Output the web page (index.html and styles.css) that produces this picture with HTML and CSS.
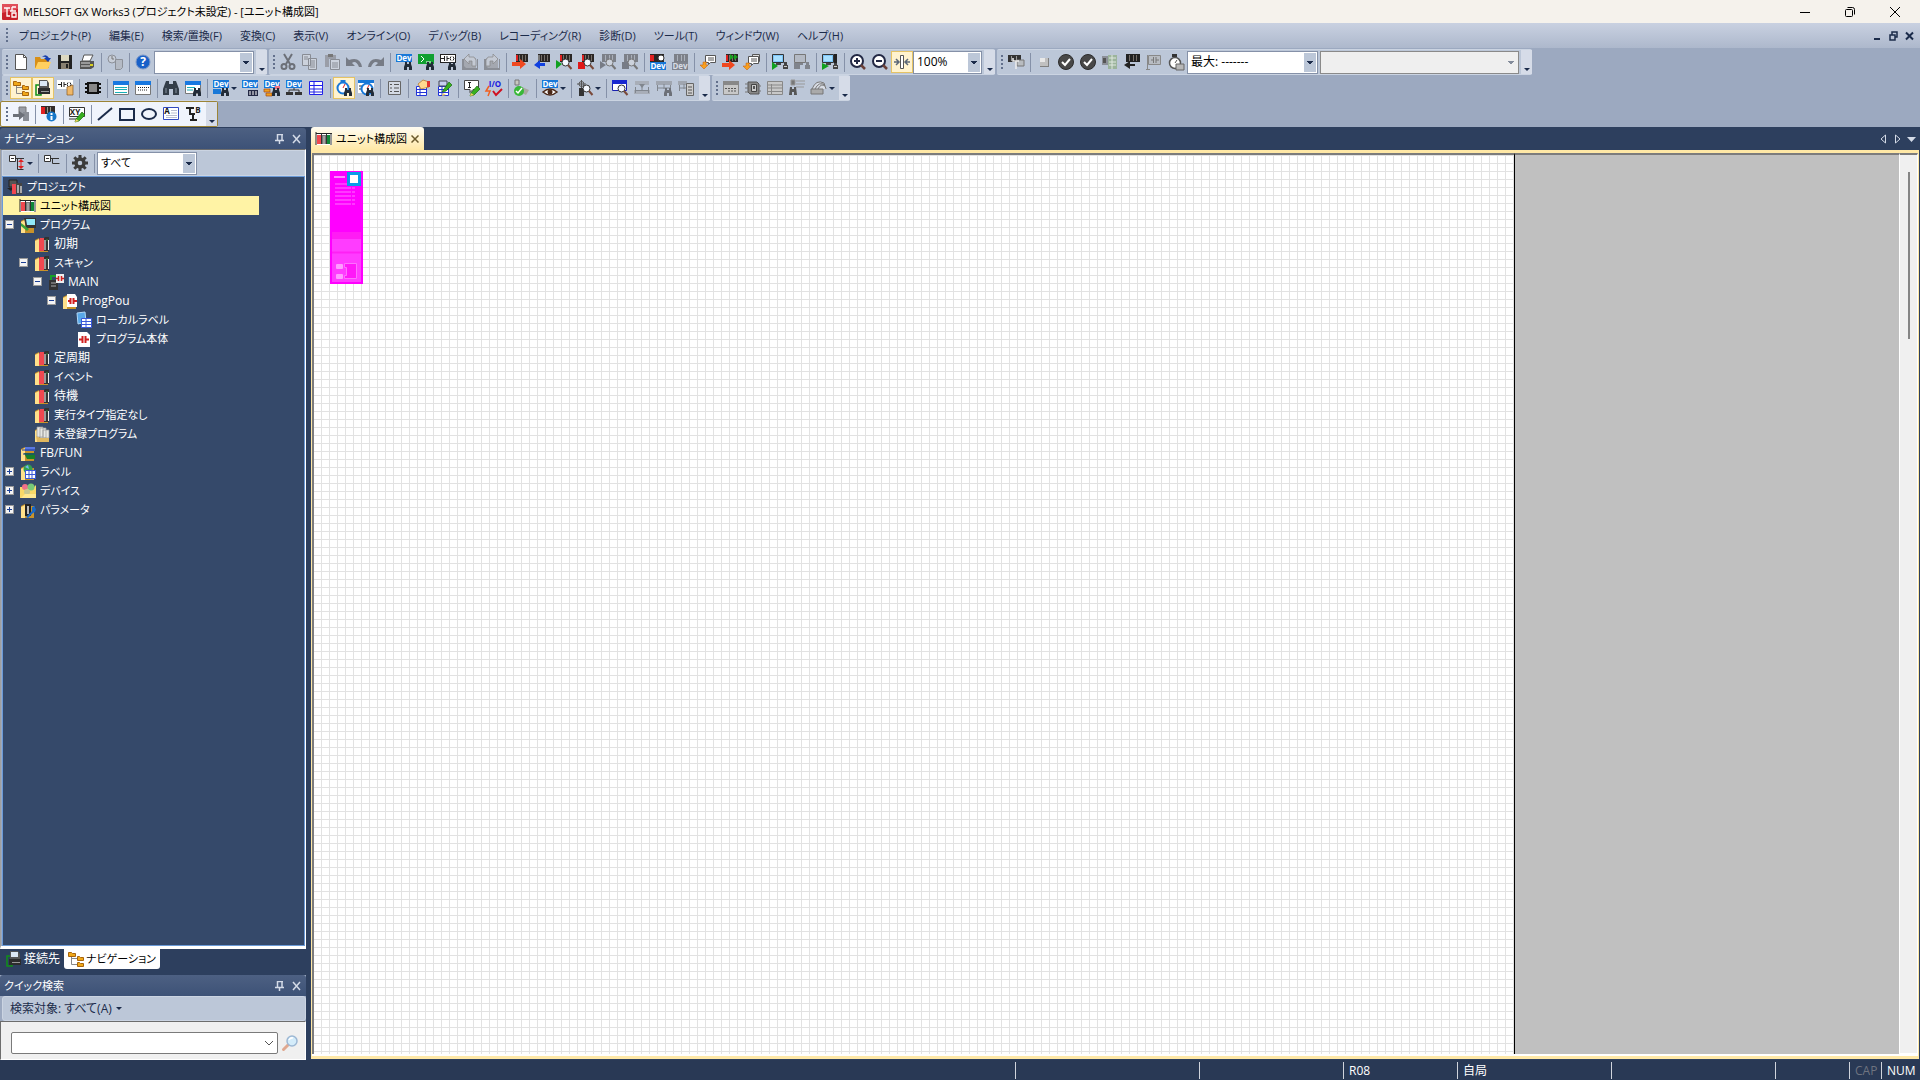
FILE: index.html
```html
<!DOCTYPE html>
<html lang="ja">
<head>
  <meta charset="UTF-8">
  <meta name="viewport" content="width=device-width, initial-scale=1.0">
  <title>MELSOFT GX Works3</title>
  <link rel="stylesheet" href="styles.css">
</head>
<body>
  <header class="titlebar">
    <svg class="icon" viewBox="0 0 16 16"><rect width="16" height="16" rx="1" fill="#c8202a"/><path d="M0 0h16v5L0 9z" fill="#e0505a"/><path d="M2 4h6M5 4v8h3M10 3v4h4M10 3h4M10 9h4v4h-4zM8 7h2" fill="none" stroke="#fff" stroke-width="1.3"/></svg>
    <h1>MELSOFT GX Works3 (プロジェクト未設定) - [ユニット構成図]</h1>
    <div class="window-btns">
      <button aria-label="最小化"><svg viewBox="0 0 10 10"><path d="M0 5.5h10" stroke="#000" fill="none"/></svg></button>
      <button aria-label="元に戻す"><svg viewBox="0 0 10 10"><path d="M.5 3.5a1 1 0 0 1 1-1h5a1 1 0 0 1 1 1v5a1 1 0 0 1-1 1h-5a1 1 0 0 1-1-1zM2.500.5h5a2 2 0 0 1 2 2v5" stroke="#000" fill="none"/></svg></button>
      <button aria-label="閉じる"><svg viewBox="0 0 10 10"><path d="M0 0l10 10M10 0L0 10" stroke="#000" fill="none"/></svg></button>
    </div>
  </header>

  <nav class="menubar">
    <span class="grip"></span>
    <ul class="menu" id="menu">
      <li><a href="#">プロジェクト(P)</a></li>
      <li><a href="#">編集(E)</a></li>
      <li><a href="#">検索/置換(F)</a></li>
      <li><a href="#">変換(C)</a></li>
      <li><a href="#">表示(V)</a></li>
      <li><a href="#">オンライン(O)</a></li>
      <li><a href="#">デバッグ(B)</a></li>
      <li><a href="#">レコーディング(R)</a></li>
      <li><a href="#">診断(D)</a></li>
      <li><a href="#">ツール(T)</a></li>
      <li><a href="#">ウィンドウ(W)</a></li>
      <li><a href="#">ヘルプ(H)</a></li>
    </ul>
    <div class="mdi-btns">
      <button aria-label="子ウィンドウを最小化"><svg viewBox="0 0 10 10"><path d="M1 8h6" stroke="#1b2b4a" stroke-width="2"/></svg></button>
      <button aria-label="子ウィンドウを元に戻す"><svg viewBox="0 0 10 10"><path d="M1 4h5v5H1zM3 4V1h5v5H6" stroke="#1b2b4a" stroke-width="1.500" fill="none"/></svg></button>
      <button aria-label="子ウィンドウを閉じる"><svg viewBox="0 0 10 10"><path d="M1 1.500l7 7M8 1.500l-7 7" stroke="#1b2b4a" stroke-width="2"/></svg></button>
    </div>
  </nav>

  <div class="toolbars">
    <div class="toolbar-row">
      <div class="toolbar" data-items="new open save print | chat | help">
        <div class="combo w-help"><select aria-label="ヘルプ検索"><option></option></select></div>
      </div>
      <div class="toolbar" data-items="cut copy paste undo redo | devfind cmdfind labfind back forward | write read monstart monstop monstart2 monstop2 | devmon devmod | cmt modcmt cmt2 | sim simoff | simsys | zoomin zoomout fit*">
        <div class="combo w-zoom"><select aria-label="表示倍率"><option>100%</option></select></div>
      </div>
      <div class="toolbar" data-items="conn | stop check check list readg flag clock">
        <div class="combo w-max"><select aria-label="最大"><option>最大: -------</option></select></div>
        <div class="combo w-target disabled"><select aria-label="対象" disabled><option></option></select></div>
      </div>
    </div>
    <div class="toolbar-row">
      <div class="toolbar" data-items="navi* online* parts | chip | out1 out2 | bino find | devuse+ devlist devtree devnet table | watch* watch2 | doc | hand pen | edit io | verify | eye+ | sight+ | winfind t1 t2 t3"></div>
      <div class="toolbar" data-items="g1 g2 g3 g4 g5+"></div>
    </div>
    <div class="toolbar-row">
      <div class="toolbar active" data-items="import | modinfo | xy | line rect oval label tb"></div>
    </div>
  </div>

  <main class="workspace">
    <aside class="side">
      <section class="panel nav-panel">
        <div class="panel-head">
          <h2>ナビゲーション</h2>
          <button aria-label="固定"><svg viewBox="0 0 10 10"><path d="M2.500 0v6M7 0v6M2 .5h6M0 6.500h9M4.500 7v3" stroke="#d4dbe8" stroke-width="1.500" fill="none"/></svg></button>
          <button aria-label="閉じる"><svg viewBox="0 0 10 10"><path d="M1 1l7 8M8 1L1 9" stroke="#d4dbe8" stroke-width="1.500"/></svg></button>
        </div>
        <div class="panel-body">
          <div class="tree-bar">
            <button class="tool drop" title="展開"><svg class="icon" viewBox="0 0 16 16"><path d="M.5.5h6v6h-6zM2 3.500h3" fill="#fff" stroke="#333"/><path d="M7 3.500h8M8.500 3.500v11h6" fill="none" stroke="#333"/><path d="M9 7l3-3 3 3zM9 11l3 3 3-3zM11.500 7h1v4h-1z" fill="#e02020"/></svg></button>
            <span class="sep"></span>
            <button class="tool" title="折りたたむ"><svg class="icon" viewBox="0 0 16 16"><path d="M.5.5h6v6h-6zM2 3.500h3" fill="#fff" stroke="#333"/><path d="M7 3.500h8M8.500 3.500v5h7" fill="none" stroke="#333"/></svg></button>
            <span class="sep"></span>
            <button class="tool" title="設定"><svg class="icon" viewBox="0 0 16 16"><circle cx="8" cy="8" r="4" fill="none" stroke="#3c3c3c" stroke-width="3.500"/><path d="M8 0v4M8 12v4M0 8h4M12 8h4M2.300 2.300l3 3M10.700 10.700l3 3M13.700 2.300l-3 3M5.300 10.700l-3 3" stroke="#3c3c3c" stroke-width="3"/></svg></button>
            <span class="sep"></span>
            <div class="combo w-filter"><select aria-label="表示対象"><option>すべて</option></select></div>
          </div>
          <ul class="tree" id="tree"></ul>
        </div>
      </section>
      <div class="side-tabs">
        <a href="#" class="side-tab"><svg class="icon" data-icon="online"></svg>接続先</a>
        <a href="#" class="side-tab current"><svg class="icon" data-icon="navi"></svg>ナビゲーション</a>
      </div>
      <section class="panel quick-panel">
        <div class="panel-head">
          <h2>クイック検索</h2>
          <button aria-label="固定"><svg viewBox="0 0 10 10"><path d="M2.500 0v6M7 0v6M2 .5h6M0 6.500h9M4.500 7v3" stroke="#d4dbe8" stroke-width="1.500" fill="none"/></svg></button>
          <button aria-label="閉じる"><svg viewBox="0 0 10 10"><path d="M1 1l7 8M8 1L1 9" stroke="#d4dbe8" stroke-width="1.500"/></svg></button>
        </div>
        <button class="quick-target">検索対象: すべて(A)</button>
        <div class="quick-body">
          <div class="quick-input">
            <select aria-label="検索文字列"><option></option></select>
            <svg viewBox="0 0 10 6"><path d="M1 1l4 4 4-4" fill="none" stroke="#555"/></svg>
          </div>
          <button class="quick-go" aria-label="検索"><svg class="icon" viewBox="0 0 16 16"><path d="M1.500 14.500l5-5" stroke="#e0a890" stroke-width="3" stroke-linecap="round"/><circle cx="10" cy="6" r="5" fill="#d4ecfa" stroke="#9db8d4" stroke-width="1.500"/><path d="M7 5a3.500 3.500 0 0 1 4-2" stroke="#fff" stroke-width="1.500" fill="none"/></svg></button>
        </div>
      </section>
    </aside>

    <section class="document">
      <div class="doc-tabs">
        <div class="doc-tab">
          <svg class="icon" data-icon="unit"></svg>
          <a href="#">ユニット構成図</a>
          <button aria-label="タブを閉じる"><svg viewBox="0 0 8 8"><path d="M.5.5l7 7M7.500.5l-7 7" stroke="#6b5a2c" stroke-width="1.500"/></svg></button>
        </div>
        <div class="doc-arrows">
          <button aria-label="前のタブ"><svg viewBox="0 0 9 10"><path d="M6.500 1v8L2 5z" fill="#2c3d5b" stroke="#d4dbe8"/></svg></button>
          <button aria-label="次のタブ"><svg viewBox="0 0 9 10"><path d="M2.500 1v8L7 5z" fill="#2c3d5b" stroke="#d4dbe8"/></svg></button>
          <button aria-label="タブ一覧"><svg viewBox="0 0 9 10"><path d="M0 3h9L4.500 8z" fill="#d4dbe8"/></svg></button>
        </div>
      </div>
      <div class="canvas">
        <div class="sheet">
          <svg class="cpu" viewBox="0 0 33 113">
            <rect width="33" height="113" fill="#f0f"/>
            <rect x="2" y="61" width="29" height="7" fill="#ff1cf4"/>
            <rect x="2" y="68" width="29" height="43" fill="#ff3cff"/>
            <path d="M2 81.500h29" stroke="#ff20f4" stroke-width="2"/>
            <path d="M4 6h11" stroke="#ff8cff" stroke-width="2"/>
            <path d="M5 13h20M5 17h20M5 21h20M5 25h20M5 29h20M5 33h20" stroke="#ff38ff" stroke-width="2"/>
            <path d="M21.500 12v23" stroke="#f0f"/>
            <rect x="6" y="93" width="7" height="5" rx="1" fill="#ff9cff"/>
            <rect x="6" y="103" width="7" height="5" rx="1" fill="#ff9cff"/>
            <path d="M14.500 92.500h12v15h-12v-3h2v-8h-2z" fill="#ff18f8" stroke="#ff70ff"/>
            <rect x="17" y="1" width="14" height="14" fill="#0a9be8"/>
            <rect x="20" y="4" width="8" height="8" fill="#fff"/>
          </svg>
        </div>
        <div class="outside"></div>
        <div class="scrollbar"><span class="thumb"></span></div>
      </div>
    </section>
  </main>

  <footer class="statusbar">
    <span class="cell"></span>
    <span class="cell s-a"></span>
    <span class="cell s-b"></span>
    <span class="cell s-cpu">R08</span>
    <span class="cell s-host">自局</span>
    <span class="cell s-c"></span>
    <span class="cell s-d"></span>
    <span class="cell s-cap">CAP</span>
    <span class="cell s-num">NUM</span>
  </footer>

  <script src="script.js"></script>
</body>
</html>
```

FILE: styles.css
```css
* {
  box-sizing: border-box;
}

body {
  margin: 0;
  height: 100vh;
  display: flex;
  flex-direction: column;
  overflow: hidden;
  font-family: "Open Sans", "Noto Sans CJK JP", sans-serif;
  font-size: 12px;
  line-height: 16px;
  font-feature-settings: "palt";
  background-color: #293955;
  color: #1b2b4a;
}

button,
select {
  font: inherit;
  font-feature-settings: inherit;
  color: inherit;
  border: none;
  background: none;
  margin: 0;
  padding: 0;
}

a {
  color: inherit;
  text-decoration: none;
}

ul {
  list-style: none;
  margin: 0;
  padding: 0;
}

h1,
h2 {
  margin: 0;
  font-size: 11px;
  font-weight: normal;
  white-space: nowrap;
}

svg {
  display: block;
}

.icon {
  width: 16px;
  height: 16px;
  flex: none;
  overflow: visible;
}

/* title bar */
.titlebar {
  height: 23px;
  display: flex;
  align-items: center;
  gap: 5px;
  padding: 0 3px 0 2px;
  background-color: #f5f2ec;
  color: #000;
}

.window-btns {
  display: flex;
  margin-left: auto;
}

.window-btns button {
  width: 45px;
  height: 20px;
  display: flex;
  align-items: center;
  justify-content: center;
}

.window-btns svg,
.mdi-btns svg,
.panel-head svg {
  width: 10px;
  height: 10px;
}

/* menu */
.menubar {
  height: 25px;
  display: flex;
  align-items: center;
  padding-left: 4px;
  background: linear-gradient(#c9d1e1, #adb8cc);
}

.grip {
  width: 6px;
  height: 15px;
  flex: none;
  background: linear-gradient(#62708c, #62708c) center top / 2px 2px no-repeat,
    linear-gradient(#62708c, #62708c) center 4px / 2px 2px no-repeat,
    linear-gradient(#62708c, #62708c) center 8px / 2px 2px no-repeat,
    linear-gradient(#62708c, #62708c) center 12px / 2px 2px no-repeat;
}

.menu {
  display: flex;
  gap: 18px;
  margin-left: 9px;
  font-size: 11px;
}

.menu li {
  white-space: nowrap;
}

.mdi-btns {
  display: flex;
  gap: 6px;
  margin-left: auto;
  padding-right: 5px;
}

/* toolbars */
.toolbars {
  padding-top: 1px;
  background-color: #9ca9c0;
}

.toolbar-row {
  display: flex;
  gap: 2px;
  padding-left: 2px;
}

.toolbar {
  height: 26px;
  display: flex;
  align-items: center;
  padding-left: 2px;
  background-color: #bcc7d8;
  border: 1px solid #cbd4e2;
  border-width: 1px 0;
  border-radius: 2px;
}

.toolbar.active {
  margin-left: -2px;
  padding-left: 3px;
  background-color: #f0f4fc;
  border: 1px solid #9c8436;
}

.tool {
  width: 22px;
  height: 22px;
  flex: none;
  display: flex;
  align-items: center;
  justify-content: center;
}

.tool.on {
  background-color: #fff3cf;
  border: 1px solid #e5c365;
}

.tool.drop {
  width: 29px;
  gap: 2px;
}

.tool.drop::after,
.quick-target::after {
  content: "";
  border: 3px solid transparent;
  border-top-color: #1b2b4a;
  border-bottom: none;
}

.sep {
  width: 1px;
  height: 19px;
  margin: 0 2px 0 3px;
  flex: none;
  background-color: #8591a8;
}

.overflow {
  width: 11px;
  align-self: stretch;
  margin-left: 2px;
  display: flex;
  align-items: flex-end;
  justify-content: center;
  padding-bottom: 3px;
  background-color: #d6dce8;
}

.overflow::after {
  content: "";
  border: 3px solid transparent;
  border-top-color: #1b2b4a;
  border-bottom: none;
}

/* drop-downs */
.combo {
  position: relative;
  height: 23px;
  border: 1px solid #8591a8;
  background-color: #fff;
  color: #000;
}

.combo select {
  width: 100%;
  height: 21px;
  padding-left: 3px;
  appearance: none;
}

.combo::after {
  content: "";
  position: absolute;
  top: 1px;
  right: 1px;
  width: 12px;
  height: 19px;
  background: linear-gradient(#1b2b4a, #1b2b4a) center 8px / 6px 1px no-repeat,
    linear-gradient(#1b2b4a, #1b2b4a) center 9px / 4px 1px no-repeat,
    linear-gradient(#1b2b4a, #1b2b4a) center 10px / 2px 1px no-repeat,
    #bcc7d8;
  pointer-events: none;
}

.combo.disabled {
  margin-left: 2px;
  background-color: #efefef;
  border-color: #8a8a8a;
}

.combo.disabled::after {
  background-color: #efefef;
  opacity: 0.5;
}

.w-help { width: 100px; }
.w-zoom { width: 69px; }
.w-max { width: 131px; }
.w-target { width: 199px; }
.w-filter { width: 100px; }

.w-filter select {
  font-size: 11px;
}

/* work area */
.workspace {
  flex: 1;
  min-height: 0;
  display: flex;
  gap: 5px;
  padding-right: 1px;
  background-color: #2d3f5e;
}

.side {
  width: 306px;
  flex: none;
  display: flex;
  flex-direction: column;
  padding-top: 1px;
}

.panel {
  display: flex;
  flex-direction: column;
}

.nav-panel {
  flex: 1;
  min-height: 0;
}

.panel-head {
  height: 21px;
  flex: none;
  display: flex;
  align-items: center;
  gap: 7px;
  padding: 0 4px;
  background: linear-gradient(#4d6082, #3d5277);
  border-radius: 3px 3px 0 0;
  color: #fff;
}

.panel-head h2 {
  flex: 1;
}

.panel-body {
  flex: 1;
  min-height: 0;
  display: flex;
  flex-direction: column;
  padding-left: 1px;
  border: 1px solid #fff;
  border-top-color: #6d6d6d;
  border-left-color: #a0a0a0;
  border-bottom-width: 3px;
  background-color: #9ca9c0;
}

.tree-bar {
  height: 26px;
  flex: none;
  display: flex;
  align-items: center;
  padding-left: 3px;
  background-color: #bcc7d8;
  border: 1px solid #cbd4e2;
}

.tree {
  flex: 1;
  background-color: #35496a;
  border: 1px solid #6a9ad8;
  color: #fff;
}

.tree ul {
  padding-left: 14px;
}

.row {
  height: 19px;
  display: flex;
  align-items: center;
  gap: 4px;
  padding-left: 2px;
  white-space: nowrap;
}

.row.kana {
  font-size: 11px;
}

.row.selected {
  width: 85%;
  background-color: #fff3a5;
  color: #000;
}

.row.root {
  padding-left: 4px;
}

.toggle {
  width: 9px;
  height: 9px;
  margin-right: 2px;
  flex: none;
  background: linear-gradient(#1c3f94, #1c3f94) center / 5px 1px no-repeat #f4f4f4;
  border: 1px solid #9a9a9a;
}

.toggle.closed {
  background: linear-gradient(#1c3f94, #1c3f94) center / 5px 1px no-repeat,
    linear-gradient(#1c3f94, #1c3f94) center / 1px 5px no-repeat, #f4f4f4;
}

.toggle.none {
  visibility: hidden;
}

.side-tabs {
  display: flex;
  margin-bottom: 6px;
  padding-left: 2px;
}

.side-tab {
  height: 20px;
  display: flex;
  align-items: center;
  gap: 2px;
  padding: 0 4px;
  color: #fff;
}

.side-tab.current {
  background-color: #fff;
  color: #000;
  font-size: 11px;
  border-radius: 0 0 3px 3px;
}

.quick-target {
  height: 25px;
  display: flex;
  align-items: center;
  gap: 4px;
  padding-left: 7px;
  margin-left: 2px;
  background-color: #bcc7d8;
  border: 1px solid #cbd4e2;
  border-radius: 3px;
}

.quick-panel {
  background: #9ca9c0;
}

.quick-body {
  height: 39px;
  display: flex;
  align-items: center;
  gap: 4px;
  padding: 4px 7px 0 10px;
  background-color: #f0f0f0;
  border: 1px solid #fff;
  border-top-color: #6d6d6d;
  border-left-color: #6d6d6d;
}

.quick-input {
  flex: 1;
  height: 22px;
  display: flex;
  align-items: center;
  padding-right: 3px;
  border: 1px solid #7a7a7a;
  border-radius: 2px;
  background-color: #fff;
}

.quick-input select {
  flex: 1;
  height: 20px;
  appearance: none;
}

.quick-input svg {
  width: 10px;
  height: 6px;
}

/* document */
.document {
  flex: 1;
  min-width: 0;
  display: flex;
  flex-direction: column;
  padding-bottom: 1px;
}

.doc-tabs {
  height: 23px;
  flex: none;
  display: flex;
  align-items: stretch;
  justify-content: space-between;
}

.doc-tab {
  display: flex;
  align-items: center;
  gap: 4px;
  padding: 0 5px;
  background: linear-gradient(#fffcf2, #ffe8a6);
  border-radius: 3px 3px 0 0;
  color: #000;
  font-size: 11px;
}

.doc-tab button svg {
  width: 8px;
  height: 8px;
}

.doc-arrows {
  display: flex;
  align-items: center;
  gap: 5px;
  padding-right: 3px;
}

.doc-arrows svg {
  width: 9px;
  height: 10px;
}

.canvas {
  flex: 1;
  min-height: 0;
  display: flex;
  padding-bottom: 2px;
  border: 1px solid #ffe8a6;
  border-width: 3px 1px;
  background-color: #fff;
}

.sheet {
  width: 1203px;
  padding: 16px;
  border: 2px solid #7c7c7c;
  border-width: 2px 1px 0 2px;
  border-right-color: #000;
  background: linear-gradient(90deg, #e2e2e2 1px, transparent 1px) 7px 0 / 8px 8px,
    linear-gradient(#e2e2e2 1px, transparent 1px) 0 0 / 8px 8px #fff;
}

.cpu {
  width: 33px;
  height: 113px;
}

.outside {
  flex: 1;
  background-color: #c0c0c0;
  border-top: 2px solid #7c7c7c;
}

.scrollbar {
  width: 19px;
  display: flex;
  justify-content: center;
  padding-top: 17px;
  border: 1px solid #fff;
  border-top: 2px solid #7c7c7c;
  background-color: #f0f0f0;
}

.thumb {
  width: 2px;
  height: 19%;
  background-color: #858585;
}

/* status bar */
.statusbar {
  height: 20px;
  display: flex;
  align-items: center;
  background-color: #293955;
  color: #fff;
}

.cell {
  height: 17px;
  line-height: 18px;
  padding-left: 5px;
  border-left: 1px solid #d0d4dc;
  flex: none;
}

.cell:first-child {
  flex: 1;
  border-left: none;
}

.s-a { width: 184px; }
.s-b { width: 144px; }
.s-cpu { width: 114px; }
.s-host { width: 154px; }
.s-c { width: 164px; }
.s-d { width: 74px; }
.s-cap { width: 32px; color: #6f7480; }
.s-num { width: 39px; }
```

FILE: script.js
```js
// shared pieces, all on a 16x16 grid
const bino = '<path d="M9 8h2v2h2V8h2v2l1 3v3h-3v-3h-2v3H8v-3l1-3z" fill="#222c38"/>';
const gbino = bino.replace("#222c38", "#6c7078");
const mag = '<circle cx="9.500" cy="8.500" r="3.500" fill="#f4f8ff" stroke="#333"/><path d="M12 11l3.500 4" stroke="#7a4a3a" stroke-width="2"/>';
const gmag = mag.replace("#7a4a3a", "#777").replace("#333", "#777").replace("#f4f8ff", "#ccd2dc");
const plc = '<path d="M4 0h12v8H4z" fill="#2a2624"/><path d="M7.500 1v6M10.500 1v6M13.500 1v6" stroke="#77706a"/><path d="M4 1h2v6H4z" fill="#e02020"/>';
const gplc = '<path d="M2 0h14v8H2z" fill="#7c8088"/><path d="M5.500 1v6M9.500 1v6M12.500 1v6" stroke="#aab0ba"/>';
const dev = '<path d="M0 0h16v8H0z" fill="#1878d8"/><text x="8" y="7" class="t" fill="#fff">Dev</text>';
const grid = '<path d="M2.500 6.500h10v9h-10zM2.500 9.500h10M2.500 12.500h10M6 6.500v9" fill="#fff" stroke="#2234d8"/>';
const pencil = '<path d="M7 13l6-7 3 3-6 6-4 1z" fill="#38b020" stroke="#1a6a10" stroke-width=".7"/><path d="M6 16l1-3 3 2z" fill="#f4d060"/>';
const page = '<path d="M2.500.5h8l3 3v12h-11z" fill="#fff" stroke="#555"/><path d="M10.500.5v3h3" fill="none" stroke="#555"/>';
const folder = '<path d="M1 4l4-2v2h9v12H1z" fill="#c8922a"/><path d="M1 5l4-2v13H1z" fill="#ffe08a"/>';
const pc = '<path d="M.5.5h11v8H.5z" fill="#7cc4f8" stroke="#333"/><path d="M2 2h8v5H2z" fill="#a8e0ff"/><path d="M4 9h5v2H4zM11 11h5v4h-5zM12 8h3v3h-3z" fill="#444"/><path d="M12 12.500h3" stroke="#ccc"/>';
const gpc = '<path d="M.5.5h11v8H.5z" fill="#b4bac4" stroke="#777"/><path d="M4 9h5v2H4zM11 11h5v4h-5zM12 8h3v3h-3z" fill="#80848c"/>';
const bars = '<path d="M5 4l1-2h4v13H5z" fill="#f04850"/><path d="M10 2l1-1h4v14h-5z" fill="#333"/><path d="M11 4v10" stroke="#999" stroke-width="2"/><path d="M12.500 4h1" stroke="#40e040"/><path d="M14.500 4v10" stroke="#eee"/>';
const cmt = '<path d="M5.500 1.500h10v7h-5l-2 2v-2h-3z" fill="#fff" stroke="#555"/><path d="M8 4h6M8 6h6" stroke="#555"/><path d="M7 8H3v3H0l4 4 4-4H6V9z" fill="#f8a020" stroke="#c05808" stroke-width=".5"/>';
const clockFace = '<path d="M4.500 0h5v2h-5z" fill="#1878d8"/><circle cx="7" cy="8" r="5.500" fill="#fff" stroke="#1878d8" stroke-width="2"/><path d="M7 8l2-4" stroke="#e02020"/>';
const ladder = '<path d="M0 0h16v9H0z" fill="#fff"/><path d="M1 4.500h3M4.500 2v5M7 2v5M7 4.500h2M11 2.500q-2 2 0 4M13 2.500q2 2 0 4" fill="none" stroke="#222"/>';

const icons = {
  new: page,
  open: '<path d="M0 3h5l1 2h8v9H0z" fill="#d89018"/><path d="M3 8h13l-3 7H0z" fill="#ffd060"/><path d="M7 3q4-4 7 1h2l-3 4-4-4h2q-1-2-4-1z" fill="#1840b0"/>',
  save: '<path d="M1 1h14v14H1z" fill="#222"/><path d="M4 1h8v6H4z" fill="#dcd8c0"/><path d="M4 9h8v6H4z" fill="#888070"/><path d="M9 10h2v4H9z" fill="#222"/>',
  print: '<path d="M5 1h9l-3 6H3z" fill="#fff" stroke="#555"/><path d="M1 7h14v6l-3 2H1z" fill="#555"/><path d="M2 9h9M2 12h9" stroke="#ddd"/><path d="M11 10h3v2h-3z" fill="#d8d020"/>',
  chat: '<circle cx="5" cy="5" r="4" fill="#c8ced8" stroke="#8c9098"/><path d="M5 2v3h2" fill="none" stroke="#777"/><path d="M8.500 5.500h7v8l-2 2h-5z" fill="#b4bac4" stroke="#8c9098"/>',
  help: '<circle cx="8" cy="8" r="7" fill="#1860c8" stroke="#7c98c8"/><text x="8" y="12" class="t" style="font-size:12px" fill="#fff">?</text>',
  cut: '<path d="M4 0l6 10M12 0L6 10" stroke="#6c7078" stroke-width="2"/><circle cx="4" cy="12.500" r="2.500" fill="none" stroke="#6c7078" stroke-width="2"/><circle cx="12" cy="12.500" r="2.500" fill="none" stroke="#6c7078" stroke-width="2"/>',
  copy: '<path d="M.5.5h8v11h-8zM6.500 4.500h8v11h-8z" fill="#ccd2dc" stroke="#888c94"/><path d="M2 3h4M2 5h4M8 7h5M8 9h5M8 11h5M8 13h5" stroke="#888c94"/>',
  paste: '<path d="M1 1h11v4H5v8H1z" fill="#9a9ea8"/><path d="M4 0h5v3H4z" fill="#777"/><path d="M6.500 5.500h9v10h-9z" fill="#ccd2dc" stroke="#888c94"/><path d="M8 9h6M8 11h6M8 13h6" stroke="#888c94"/>',
  undo: '<path d="M0 3v9h9L6 9q4-3 7 4h3Q14 2 3 6z" fill="#777c86"/>',
  redo: '<path d="M16 3v9H7l3-3q-4-3-7 4H0Q2 2 13 6z" fill="#777c86"/>',
  devfind: dev + bino,
  cmdfind: '<path d="M0 0h16v10H0z" fill="#10a030"/><path d="M3 2l3 3-3 3M8 8h5" fill="none" stroke="#fff"/>' + bino,
  labfind: '<path d="M0 0h16v9H0z" fill="#222"/>' + ladder.replace("M0 0h16v9H0z", "M1 1h14v7H1z") + bino,
  back: '<path d="M1 5h3v9h11V5h1v11H0V5z" fill="#8a8e96"/><path d="M2 12V4h12v10H4" fill="#a4a8b0"/><path d="M10 12V7H7v3L2 5l5-5v3h5l2 3v6z" fill="#c4cad4" stroke="#888" stroke-width=".7"/>',
  forward: '<path d="M1 5h3v9h11V5h1v11H0V5z" fill="#8a8e96"/><path d="M2 12V4h12v10H4" fill="#a4a8b0"/><path d="M6 12V7h3v3l5-5-5-5v3H4L2 6v6z" fill="#c4cad4" stroke="#888" stroke-width=".7"/>',
  write: plc + '<path d="M0 8h8V5l6 5-6 5v-3H0z" fill="#f04820"/>',
  read: plc.replace("#e02020", "#777") + '<path d="M11 9H6V6l-6 5 6 4v-3h5z" fill="#1040e0"/>',
  monstart: plc + '<path d="M0 6l6 4-6 5z" fill="#10a020"/>' + mag,
  monstop: plc + '<path d="M0 8h7v7H0z" fill="#e01818"/>' + mag,
  monstart2: gplc + '<path d="M0 7l6 4-6 4z" fill="#777c86"/>' + gmag,
  monstop2: gplc + '<path d="M0 8h7v7H0z" fill="#777c86"/>' + gmag,
  devmon: '<path d="M0 0h14v8H0z" fill="#2a2624"/><path d="M0 1h4v6H0z" fill="#e02020"/><circle cx="11" cy="4" r="3" fill="#fff" stroke="#333"/><path d="M0 8h16v8H0z" fill="#1878d8"/><text x="8" y="15" class="t" fill="#fff">Dev</text>',
  devmod: gplc + '<path d="M0 8h16v8H0z" fill="#80848e"/><text x="8" y="15" class="t" fill="#d8dce4">Dev</text>',
  cmt: cmt,
  modcmt: plc + '<path d="M0 9h7V6l6 5-6 5v-3H0z" fill="#f04820"/><path d="M8 0l4 3-4 3zM12 0l4 3-4 3z" fill="#18a020"/>',
  cmt2: '<path d="M8.500.5h7v7h-7z" fill="#ddd" stroke="#555"/><g transform="translate(-1 1)">' + cmt + "</g>",
  sim: pc + '<path d="M0 8l6 4-6 4z" fill="#10a020"/>',
  simoff: gpc + '<path d="M0 9h6v6H0z" fill="#80848c"/>',
  simsys: pc + '<path d="M12 0h3v9h-3z" fill="#222"/><path d="M0 9l7 3-7 4z" fill="#10a020"/>',
  zoomin: '<circle cx="7" cy="7" r="6" fill="#fff" stroke="#222844" stroke-width="2"/><path d="M11 11l4 4" stroke="#6a4038" stroke-width="2.500"/><path d="M7 4v6M4 7h6" stroke="#222844" stroke-width="2"/>',
  zoomout: '<circle cx="7" cy="7" r="6" fill="#fff" stroke="#222844" stroke-width="2"/><path d="M11 11l4 4" stroke="#6a4038" stroke-width="2.500"/><path d="M4 7h6" stroke="#222844" stroke-width="2"/>',
  fit: '<path d="M6.500 1.500h3v13h-3z" fill="#fff" stroke="#555"/><path d="M0 8h5M2 5l3 3-3 3M16 8h-5M14 5l-3 3 3 3" fill="none" stroke="#5c6878" stroke-width="1.500"/>',
  conn: '<path d="M0 1h13v7H0z" fill="#333"/><path d="M3.500 2v5M8.500 2v5" stroke="#999"/><path d="M9 6h7v6H9z" fill="#b8bcc0" stroke="#777"/><path d="M5 4v3h3v8M11 7H8" stroke="#eee" fill="none" stroke-width="1.500"/>',
  stop: '<path d="M4 4h9v9H4z" fill="#808080"/><path d="M4 4h8v8H4z" fill="#c0c0c0"/><path d="M4 4h5v4H4z" fill="#e8e8e8"/>',
  check: '<circle cx="8" cy="8" r="7.500" fill="#484848" stroke="#2c2c2c"/><path d="M4 8l3 3 5-6" fill="none" stroke="#fff" stroke-width="2"/>',
  list: '<path d="M0 2h7v9H0z" fill="#8c9098"/><path d="M1 4h3v5H1z" fill="#555"/><path d="M6 1h9v14H6z" fill="#9cb49c"/><path d="M7 4h7M7 8h7M7 11h7M10 1v14" stroke="#dfe8df"/>',
  readg: '<path d="M2 0h14v8H2z" fill="#222"/><path d="M5.500 1v6M9.500 1v6M12.500 1v6" stroke="#77706a"/><path d="M11 10H6V7l-6 4 6 4v-3h5z" fill="#222"/>',
  flag: '<path d="M1.500 1v15M0 15.500h4" stroke="#888"/><path d="M2.500 1.500h12v9h-12z" fill="#b8bcc2" stroke="#888"/><path d="M5 6h2M7.500 3v6M10 3v6M10 6h3" stroke="#777"/>',
  clock: '<path d="M4 0h5v3H4z" fill="#333"/><circle cx="7" cy="9" r="5.500" fill="#fff" stroke="#555" stroke-width="1.500"/><path d="M7 9l2-3" stroke="#555"/><path d="M8 10h8v6H8z" fill="#b8b8b8" stroke="#666"/>',
  navi: '<path d="M3.500 6v7.500H9M3.500 7.500H9" fill="none" stroke="#888"/><path d="M.5 1.500h3l1 1h3v3h-7zM9.500 5.500h2l1 1h3v3h-6zM9.500 11.500h2l1 1h3v3h-6z" fill="#f0a818" stroke="#a8640c"/>',
  online: '<path d="M1 5h5v10H1z" fill="none" stroke="#109018" stroke-width="1.500"/><path d="M4 0h8l2 3v8H4z" fill="#555"/><path d="M5 1h7v5H5z" fill="#dce8f4"/><path d="M3 8h12v6H3z" fill="#2c2c2c"/><path d="M6 11.500h8" stroke="#999"/>',
  parts: ladder + '<path d="M10 7l6-2v10h-6z" fill="#f0b868" stroke="#8a5a20" stroke-width=".7"/>',
  chip: '<path d="M3 3h10v10H3z" fill="#888" stroke="#111" stroke-width="2"/><path d="M0 4h3M0 8h3M0 12h3M13 4h3M13 8h3M13 12h3" stroke="#111" stroke-width="2"/>',
  out1: '<path d="M.5 1.500h15v13H.5z" fill="#fff" stroke="#777"/><path d="M0 1h16v4H0z" fill="#1878e0"/><path d="M2 7.500h12M2 9.500h12M2 12.500h12" stroke="#18b0b8"/>',
  out2: '<path d="M.5 1.500h15v13H.5z" fill="#fff" stroke="#777"/><path d="M0 1h16v4H0z" fill="#1878e0"/><path d="M3 7.500h11M3 10h9" stroke="#222" stroke-dasharray="1 1"/>',
  bino: '<path d="M3 1h3v3h4V1h3l3 8v6h-6V9H6v6H0V9z" fill="#333d48"/><path d="M3 8v5M13 8v5" stroke="#8894a0"/>',
  find: '<path d="M.5 1.500h15v12H.5z" fill="#fff" stroke="#777"/><path d="M0 1h16v4H0z" fill="#1878e0"/><path d="M2 7.500h8M2 10h6" stroke="#18b0b8"/>' + bino,
  devuse: dev + '<path d="M0 9h8v5H0z" fill="#1878d8"/>' + bino,
  devlist: dev + '<path d="M6 10h10v6H6z" fill="#222844"/><path d="M7 12h2M10 12h2M13 12h2M7 14h2M10 14h2M13 14h2" stroke="#fff"/>',
  devtree: dev + '<path d="M0 9h6v3H0zM2 13h6v3H2z" fill="#f0a020" stroke="#a04818" stroke-width=".7"/><path d="M11 6h5v3h-5z" fill="#f07080"/>' + bino,
  devnet: dev + '<path d="M8 8v2M3 12v-2h10v2" fill="none" stroke="#333"/><path d="M0 12h7v3H0zM9 12h7v3H9z" fill="#333"/>',
  table: '<path d="M1.500 1.500h13v13h-13zM1.500 5.500h13M1.500 9h13M1.500 12h13M6 1.500v13" fill="#fff" stroke="#2020e8"/>',
  watch: clockFace + bino,
  watch2: '<path d="M0 1h16v12H0z" fill="#fff"/><path d="M0 0h16v3H0z" fill="#1878d8"/><path d="M1 6h3M1 9h3" stroke="#333"/><g transform="translate(2 1)">' + clockFace + "</g>" + bino,
  doc: '<path d="M2.500 1.500h12v13h-12z" fill="#d4dae4" stroke="#666"/><path d="M4 4.500h2M8 4.500h5M4 8h2M8 8h5M4 11.500h2M8 11.500h5" stroke="#555"/>',
  hand: grid + '<path d="M4 4l5-4 6 2v5l-8 2z" fill="#ffd890" stroke="#b07020" stroke-width=".7"/><path d="M13 1h3v6h-3z" fill="#e03030"/>',
  pen: grid + '<path d="M3 1h8v5H3z" fill="#c8d0f0" stroke="#445"/>' + pencil.replace("M7 13l6-7", "M8 9l5-7"),
  edit: '<path d="M.5.5h14v9H9l-3 3v-3H.5z" fill="#fff" stroke="#444"/><path d="M4 2.500h3M5.500 2.500v5M4 7.500h3" stroke="#222"/>' + pencil,
  io: '<text x="9" y="7" class="t" fill="#1818e0">I/O</text><path d="M3 6L0 11h4l-2 5" fill="none" stroke="#f06020" stroke-width="1.500"/><path d="M7 11l3 4 6-6" fill="none" stroke="#d01020" stroke-width="2"/>',
  verify: '<path d="M1 0h4v5H1z" fill="#c8c8c0" stroke="#777"/><path d="M8 7l7 3-3 5-6-3z" fill="#a8a8a0"/><circle cx="5" cy="11" r="5" fill="#38b838"/><path d="M2 11l2 2 4-5" fill="none" stroke="#fff" stroke-width="1.500"/>',
  eye: dev + '<path d="M1 12q7-6 14 0-7 6-14 0z" fill="#fff" stroke="#4a2818" stroke-width="1.500"/><circle cx="8" cy="12" r="2.500" fill="#4a2818"/>',
  sight: '<path d="M4.500 0v8M0 4h9" stroke="#555"/><circle cx="4.500" cy="4" r="2.500" fill="none" stroke="#555"/><path d="M2 8h5v8H2z" fill="#333"/>' + mag,
  winfind: '<path d="M.5.5h14v10H.5z" fill="#fff" stroke="#1820b0"/><path d="M0 0h15v4H0z" fill="#1828d0"/>' + mag,
  t1: '<path d="M1 1h14v4H1zM0 10h16v4H0z" fill="#a8aeb8"/><path d="M1.500 7v6M14.500 7v6M2 10.500h12M8 6v5" stroke="#80868e"/><path d="M5 4h6L8 8z" fill="#80868e"/>',
  t2: '<path d="M0 1h16v4H0z" fill="#a0a6b0"/><path d="M1.500 5v6M2 8h12M14.500 5v4M8 4v5" stroke="#80868e"/>' + gbino,
  t3: '<path d="M0 1h9v4H0z" fill="#a0a6b0"/><path d="M1.500 5v6M2 8h6M6 4v5" stroke="#80868e"/><path d="M8.500 3.500h7v12h-7z" fill="#ccc" stroke="#666"/><path d="M10 7h4M10 10h4M10 13h4" stroke="#555"/>',
  g1: '<path d="M.5 1.500h15v13H.5z" fill="#c8c8c8" stroke="#888"/><path d="M0 1h16v4H0z" fill="#888"/><path d="M2 8.500h12M5 11h9" stroke="#555" stroke-dasharray="2 1"/>',
  g2: '<path d="M3 2h9l2 2v10H5l-2-2z" fill="#888" stroke="#555"/><path d="M6.500 4.500h5v7h-5z" fill="#ccc" stroke="#444"/><path d="M8 6h2v3H8z" fill="#555"/><path d="M0 4h3M0 8h3M0 12h3M14 6h2M14 11h2" stroke="#777"/>',
  g3: '<path d="M.5 1.500h15v13H.5z" fill="#c8c8c8" stroke="#888"/><path d="M0 5h16M0 8h16M0 11.500h16M4.500 4v11" stroke="#888"/>',
  g4: '<path d="M2 0h4v5H2zM7 1h9M7 4h9M7 7h8" fill="#777" stroke="#999"/><path d="M1 7h2v2h2V7h2l1 8H5v-3H3v3H0z" fill="#555"/>',
  g5: '<path d="M1 9q4-10 12-6l2 6" fill="#d8dce4" stroke="#777"/><path d="M4 9q4-8 10-4M7 9q3-6 7-3" fill="none" stroke="#777"/><path d="M0 9h12v5H0z" fill="#aaa" stroke="#777"/>',
  import: '<path d="M6 1h7v9H6z" fill="#9a9ea6" stroke="#777"/><path d="M10 6h6v9h-6z" fill="#8a8e96"/><path d="M0 8h6V5l6 4-6 5v-3H0z" fill="#6c7078"/>',
  modinfo: '<path d="M0 0h14v8H0z" fill="#332c2a"/><path d="M0 1h4v7H0z" fill="#e02020"/><path d="M6.500 1v6M9.500 1v6" stroke="#998"/><circle cx="10.500" cy="10.500" r="5" fill="#1878c8"/><path d="M10.500 10v4M10.500 7v2" stroke="#fff" stroke-width="2"/>',
  xy: '<path d="M.5 1.500h15v9H.5z" fill="#fff" stroke="#333"/><text x="6" y="9" class="t" fill="#222">XY</text><path d="M0 13h8" stroke="#333"/>' + pencil,
  line: '<path d="M1 14L15 2" stroke="#1b2b4a" stroke-width="2"/>',
  rect: '<path d="M1 3h14v11H1z" fill="none" stroke="#1b2b4a" stroke-width="2"/>',
  oval: '<ellipse cx="8" cy="8" rx="7" ry="5" fill="none" stroke="#1b2b4a" stroke-width="2"/>',
  label: '<path d="M.5 1.500h15v12H.5z" fill="#fff" stroke="#3048c0"/><text x="4" y="8" class="t" fill="#111">A</text><path d="M8 4.500h6M8 7h6M3 9.500h11M3 11.500h11" stroke="#b8bcd0"/>',
  tb: '<path d="M1 2h8M5 2v6h5M8 8v6M5 14h7" stroke="#222" stroke-width="2" fill="none"/><text x="13" y="7" class="t" fill="#222">B</text>',
  // tree
  project: '<path d="M2 1h8v7H2z" fill="#555" stroke="#222"/><path d="M0 9h6l-2 3z" fill="#222"/><path d="M5 5h4v10H5z" fill="#f04850"/><path d="M9 4h6v11H9z" fill="#444"/><path d="M11 6v8M14 7v7" stroke="#ccc" stroke-width="1.500"/>',
  unit: '<path d="M0 3h16v11H0z" fill="#fff"/><path d="M0 2.500h16M0 1v13" stroke="#222"/><path d="M1 4h4v9H1z" fill="#f04850"/><path d="M6 4h4v9H6z" fill="#777"/><path d="M8 5v8" stroke="#ccc"/><path d="M11 4h3v9h-3z" fill="#108838"/><path d="M5.500 3v10M10.500 3v10M15 2v12" stroke="#333"/>',
  program: folder + '<path d="M4 1h12v10H6z" fill="#333"/><path d="M6 2h9v6H7z" fill="#90e8f8"/><path d="M1 6l8 6-2 2-6-5z" fill="#38a038"/>',
  scan: folder + bars,
  main: '<path d="M1 6h9v10H1z" fill="#333"/><path d="M3 9h5M3 12h5" stroke="#aaa"/><path d="M3 6V2h5" fill="none" stroke="#18a028" stroke-width="2"/><path d="M8 0h8v9H8z" fill="#eee"/><path d="M10.500 2v5M13.500 2v5M8 4.500h2M14 4.500h2" stroke="#d02020" stroke-width="1.500"/>',
  pou: folder + '<path d="M5 1h8l2 3v10H5z" fill="#fff"/><path d="M8.500 5v6M11.500 5v6M6 8h2M12 8h3" stroke="#d02020" stroke-width="2"/>',
  local: '<path d="M1 1l8-1 1 10-8 2z" fill="#58a8e8" stroke="#b0d8f8"/><path d="M5.500 6.500h10v9h-10zM5.500 9.500h10M5.500 12.500h10M10 6.500v9" fill="#fff" stroke="#3858d8"/>',
  body: '<path d="M2 1h9l3 3v12H2z" fill="#fff"/><path d="M6.500 5v7M9.500 5v7M3 8.500h3M10 8.500h3" stroke="#d02020" stroke-width="2"/>',
  unreg: folder + '<path d="M3 1h6v10H3zM6 2h6v10H6zM9 4h6v8H9z" fill="#e8e8e4" stroke="#999" stroke-width=".7"/><path d="M2 10l4 2h9v4H3z" fill="#e0b860"/>',
  fb: folder + '<path d="M5 2h10v4H5z" fill="#5878e0"/><path d="M4 8h11v6H7z" fill="#188028"/><path d="M2 5h13M3 9h12" stroke="#203890"/>',
  lbl: folder + '<circle cx="8" cy="5" r="4.500" fill="#30a050"/><path d="M5 3l3-2 1 4z" fill="#70b8f0"/><path d="M5.500 6.500h10v8h-10zM5.500 10.500h10M9 6.500v8M12 6.500v8" fill="#fff" stroke="#3858d8"/>',
  device: '<path d="M0 4h14l2-2v13H0z" fill="#f8d868"/><circle cx="5" cy="4" r="3" fill="#f07088"/><circle cx="11" cy="4" r="3.500" fill="#78c878"/><circle cx="7" cy="9" r="3" fill="#c8c890"/><path d="M1 15l4-4h11v4z" fill="#ffe890"/>',
  param: folder + '<path d="M5 2h6v12H5z" fill="#222"/><path d="M8 4v8" stroke="#bbb" stroke-width="2"/><path d="M6 15l6-6V5l3-1v2l1 1-1 3-2 1-5 5z" fill="#1868c8"/>'
};

function svg(name) {
  return `<svg class="icon" viewBox="0 0 16 16" font-size="8" font-weight="bold" text-anchor="middle">${icons[name]}</svg>`;
}

// "*" = pressed, "+" = has a drop-down arrow, "|" = separator
document.querySelectorAll(".toolbar").forEach(bar => {
  const html = bar.dataset.items.split(" ").map(item => {
    if (item === "|") return '<span class="sep"></span>';
    const name = item.replace(/[*+]/, "");
    const cls = item.endsWith("*") ? " on" : item.endsWith("+") ? " drop" : "";
    return `<button class="tool${cls}" aria-label="${name}">${svg(name)}</button>`;
  }).join("");
  bar.insertAdjacentHTML("afterbegin", '<span class="grip"></span>' + html);
  bar.insertAdjacentHTML("beforeend", '<span class="overflow"></span>');
});

document.querySelectorAll("svg[data-icon]").forEach(el => {
  el.setAttribute("viewBox", "0 0 16 16");
  el.innerHTML = icons[el.dataset.icon];
});

const tree = [
  { t: "プロジェクト", i: "project", cls: "root kana" },
  { t: "ユニット構成図", i: "unit", cls: "selected kana" },
  { t: "プログラム", i: "program", cls: "kana", open: true, sub: [
    { t: "初期", i: "scan" },
    { t: "スキャン", i: "scan", cls: "kana", open: true, sub: [
      { t: "MAIN", i: "main", open: true, sub: [
        { t: "ProgPou", i: "pou", open: true, sub: [
          { t: "ローカルラベル", i: "local", cls: "kana" },
          { t: "プログラム本体", i: "body", cls: "kana" }
        ] }
      ] }
    ] },
    { t: "定周期", i: "scan" },
    { t: "イベント", i: "scan", cls: "kana" },
    { t: "待機", i: "scan" },
    { t: "実行タイプ指定なし", i: "scan", cls: "kana" },
    { t: "未登録プログラム", i: "unreg", cls: "kana" }
  ] },
  { t: "FB/FUN", i: "fb" },
  { t: "ラベル", i: "lbl", cls: "kana", open: false },
  { t: "デバイス", i: "device", cls: "kana", open: false },
  { t: "パラメータ", i: "param", cls: "kana", open: false }
];

function renderTree(nodes) {
  return nodes.map(n => {
    const cls = n.cls || "";
    const state = n.open === undefined ? "none" : n.open ? "" : "closed";
    const toggle = cls.includes("root") ? "" : `<button class="toggle ${state}" aria-label="展開"></button>`;
    return `<li><div class="row ${cls}">${toggle}${svg(n.i)}<span>${n.t}</span></div>${n.sub ? `<ul>${renderTree(n.sub)}</ul>` : ""}</li>`;
  }).join("");
}

document.getElementById("tree").innerHTML = renderTree(tree);
```
